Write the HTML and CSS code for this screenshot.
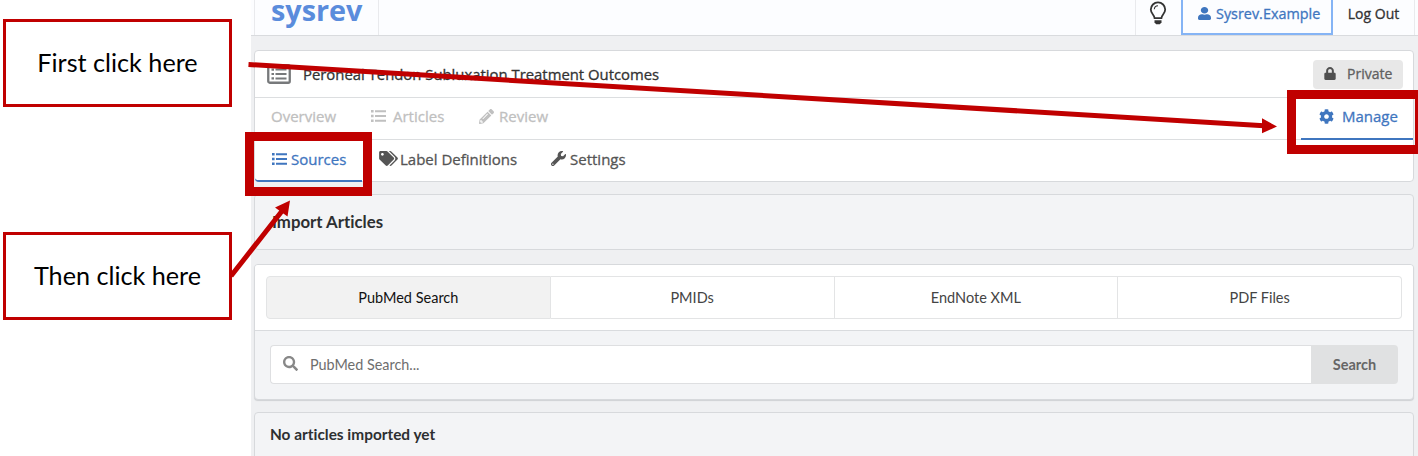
FILE: index.html
```html
<!DOCTYPE html>
<html lang="en">
<head>
<meta charset="utf-8">
<title>sysrev</title>
<link rel="stylesheet" href="styles.css">
</head>
<body>
<div class="page">
  <aside class="notes">
    <div class="note"><span class="note-first">First click here</span></div>
    <div class="note"><span class="note-then">Then click here</span></div>
  </aside>
  <div class="app">
    <header class="topbar">
      <div class="topmenu">
        <div class="logo"><span>sysrev</span></div>
        <div class="theme">
          <svg class="bulb" viewBox="0 0 18 24"><path d="M5.6 17.2C5.4 13.6 1.8 12.600 1.8 8.600A7.200 7.200 0 0 1 16.200 8.600C16.200 12.600 12.600 13.600 12.400 17.200Z" fill="none" stroke="currentColor" stroke-width="1.8"/><path d="M5.300 8.300A3.800 3.800 0 0 1 9 4.800" fill="none" stroke="currentColor" stroke-width="1.100"/><path d="M5.500 19.300h7v2.200l-1.700 1.800h-3.600l-1.700-1.800z" fill="currentColor"/></svg>
        </div>
        <div class="user">
          <svg class="icon-user" viewBox="0 0 448 512" preserveAspectRatio="none"><path d="M224 256c70.7 0 128-57.3 128-128S294.700 0 224 0 96 57.300 96 128s57.300 128 128 128zm89.600 32h-16.700c-22.200 10.200-46.900 16-72.900 16s-50.600-5.800-72.900-16h-16.700C60.200 288 0 348.200 0 422.400V464c0 26.500 21.500 48 48 48h352c26.500 0 48-21.500 48-48v-41.600c0-74.200-60.200-134.400-134.400-134.400z"/></svg>
          <span>Sysrev.Example</span>
        </div>
        <div class="logout"><span>Log Out</span></div>
      </div>
    </header>
    <main class="content">
      <section class="card project">
        <div class="project-title">
          <svg class="icon-listalt" viewBox="0 0 24 20"><rect x="1.250" y="1.250" width="21.500" height="17.500" rx="1.500" fill="none" stroke="currentColor" stroke-width="2.300"/><path d="M4.500 4.500h2.500v2.200H4.500zM8.500 4.600h11v2h-11zM4.500 8.900h2.500v2.200H4.500zM8.500 9h11v2h-11zM4.500 13.300h2.500v2.200H4.500zM8.500 13.400h11v2h-11z"/></svg>
          <span class="title">Peroneal Tendon Subluxation Treatment Outcomes</span>
          <div class="private">
            <svg class="icon-lock" viewBox="0 0 448 512"><path d="M400 224h-24v-72C376 68.200 307.800 0 224 0S72 68.200 72 152v72H48c-26.500 0-48 21.500-48 48v192c0 26.500 21.500 48 48 48h352c26.500 0 48-21.500 48-48V272c0-26.500-21.500-48-48-48zm-104 0H152v-72c0-39.700 32.300-72 72-72s72 32.300 72 72v72z"/></svg>
            <span>Private</span>
          </div>
        </div>
        <nav class="tabs primary">
          <span class="tab overview">Overview</span>
          <span class="tab articles"><svg class="icon-list" viewBox="0 0 15 12"><path d="M0 0h2.600v2.400H0zM4 .2h11v2H4zM0 4.800h2.600v2.400H0zM4 5h11v2H4zM0 9.600h2.600V12H0zM4 9.800h11v2H4z"/></svg>Articles</span>
          <span class="tab review"><svg class="icon-pencil" viewBox="0 0 512 512"><path d="M497.900 142.100l-46.100 46.100c-4.700 4.700-12.300 4.700-17 0l-111-111c-4.700-4.700-4.700-12.300 0-17l46.100-46.100c18.700-18.700 49.100-18.700 67.900 0l60.100 60.100c18.800 18.700 18.800 49.100 0 67.900zM284.200 99.800L21.600 362.400.4 483.900c-2.900 16.400 11.400 30.600 27.800 27.800l121.500-21.300 262.600-262.600c4.700-4.700 4.700-12.300 0-17l-111-111c-4.800-4.700-12.400-4.700-17.100 0zM124.100 339.900c-5.500-5.500-5.500-14.300 0-19.800l154-154c5.500-5.500 14.300-5.500 19.800 0s5.500 14.300 0 19.800l-154 154c-5.500 5.500-14.300 5.500-19.800 0zM88 424h48v36.300l-64.500 11.300-31.100-31.100L51.700 376H88v48z"/></svg>Review</span>
          <span class="tab manage"><svg class="icon-cog" viewBox="0 0 512 512"><path d="M487.400 315.700l-42.600-24.600c4.300-23.200 4.300-47 0-70.200l42.600-24.600c4.900-2.800 7.100-8.600 5.500-14-11.100-35.600-30-67.800-54.700-94.600-3.800-4.100-10-5.100-14.800-2.300L380.800 110c-17.900-15.400-38.500-27.300-60.800-35.100V25.800c0-5.600-3.900-10.500-9.400-11.700-36.700-8.200-74.300-7.800-109.200 0-5.500 1.200-9.400 6.100-9.400 11.700V75c-22.200 7.900-42.800 19.800-60.800 35.100L88.700 85.500c-4.900-2.800-11-1.900-14.800 2.300-24.700 26.700-43.600 58.900-54.700 94.600-1.700 5.400.6 11.200 5.500 14L67.300 221c-4.300 23.200-4.300 47 0 70.200l-42.600 24.600c-4.900 2.800-7.100 8.600-5.500 14 11.100 35.600 30 67.800 54.700 94.600 3.800 4.100 10 5.100 14.800 2.300l42.600-24.600c17.900 15.400 38.500 27.300 60.800 35.100v49.200c0 5.600 3.900 10.500 9.400 11.700 36.700 8.200 74.300 7.800 109.200 0 5.500-1.200 9.400-6.100 9.400-11.700v-49.200c22.200-7.900 42.800-19.800 60.800-35.100l42.600 24.600c4.900 2.800 11 1.900 14.800-2.300 24.700-26.700 43.600-58.900 54.700-94.600 1.500-5.500-.7-11.300-5.600-14.100zM256 336c-44.100 0-80-35.900-80-80s35.900-80 80-80 80 35.900 80 80-35.900 80-80 80z"/></svg>Manage</span>
        </nav>
        <nav class="tabs secondary">
          <span class="tab sources"><svg class="icon-list" viewBox="0 0 15 12"><path d="M0 0h2.600v2.400H0zM4 .2h11v2H4zM0 4.800h2.600v2.400H0zM4 5h11v2H4zM0 9.600h2.600V12H0zM4 9.800h11v2H4z"/></svg>Sources</span>
          <span class="tab labels"><svg class="icon-tags" viewBox="0 0 640 512"><path d="M497.941 225.941L286.059 14.059A48 48 0 0 0 252.118 0H48C21.490 0 0 21.490 0 48v204.118a48 48 0 0 0 14.059 33.941l211.882 211.882c18.744 18.745 49.136 18.746 67.882 0l204.118-204.118c18.745-18.745 18.745-49.137 0-67.882zM112 160c-26.510 0-48-21.490-48-48s21.490-48 48-48 48 21.490 48 48-21.490 48-48 48zm513.941 133.823L421.823 497.941c-18.745 18.745-49.137 18.745-67.882 0l-.36-.36L527.640 323.522c16.999-16.999 26.360-39.600 26.360-63.640s-9.362-46.641-26.360-63.640L331.397 0h48.721a48 48 0 0 1 33.941 14.059l211.882 211.882c18.745 18.745 18.745 49.137 0 67.882z"/></svg>Label Definitions</span>
          <span class="tab settings"><svg class="icon-wrench" viewBox="0 0 512 512"><path d="M507.730 109.100c-2.240-9.030-13.540-12.090-20.120-5.510l-74.360 74.360-67.880-11.310-11.310-67.880 74.360-74.360c6.620-6.620 3.430-17.900-5.660-20.160-47.380-11.740-99.550.91-136.580 37.930-39.640 39.640-50.550 97.100-34.050 147.200L18.740 402.760c-24.990 24.990-24.990 65.510 0 90.500 24.990 24.990 65.510 24.990 90.500 0l213.210-213.210c50.120 16.710 107.470 5.680 147.370-34.220 37.070-37.070 49.700-89.320 37.910-136.730zM64 472c-13.250 0-24-10.750-24-24 0-13.260 10.750-24 24-24s24 10.740 24 24c0 13.250-10.750 24-24 24z"/></svg>Settings</span>
        </nav>
      </section>
      <section class="card import"><h4>Import Articles</h4></section>
      <section class="card sources-card">
        <div class="source-tabs">
          <span class="source active">PubMed Search</span>
          <span class="source">PMIDs</span>
          <span class="source">EndNote XML</span>
          <span class="source">PDF Files</span>
        </div>
        <div class="search-row">
          <div class="search-input">
            <svg class="icon-search" viewBox="0 0 512 512"><path d="M505 442.700L405.300 343c-4.500-4.500-10.600-7-17-7H372c27.600-35.300 44-79.700 44-128C416 93.100 322.900 0 208 0S0 93.100 0 208s93.100 208 208 208c48.300 0 92.700-16.400 128-44v16.300c0 6.400 2.500 12.500 7 17l99.700 99.700c9.400 9.400 24.600 9.400 33.900 0l28.300-28.300c9.400-9.400 9.400-24.600.1-34zM208 336c-70.700 0-128-57.200-128-128 0-70.700 57.200-128 128-128 70.700 0 128 57.200 128 128 0 70.700-57.200 128-128 128z"/></svg>
            <span>PubMed Search...</span>
          </div>
          <div class="search-button"><span>Search</span></div>
        </div>
      </section>
      <section class="card empty"><h5>No articles imported yet</h5></section>
    </main>
  </div>
  <svg class="annotations" viewBox="0 0 1418 456">
    <rect x="1291.500" y="94.500" width="128" height="55"/>
    <rect x="249.500" y="136.500" width="118" height="55"/>
    <path d="M248.500 64.500L1264 125.700M231 276L282 211" class="shaft"/>
    <path d="M1277 126.600L1262 118.300V133.200ZM290 200.500L275 207.500L287.500 216.500Z" class="head"/>
  </svg>
</div>
</body>
</html>
```
FILE: styles.css
```css
* { box-sizing: border-box; }
body { margin: 0; background: #fff; font-family: "Open Sans", sans-serif; font-size: 14px; font-weight: 500; color: #333; font-variant-ligatures: none; }
svg { flex: none; fill: currentColor; display: block; }
span { white-space: nowrap; }
h4, h5 { margin: 0; font-family: Lato, sans-serif; font-weight: 700; color: #2d2f31; }

.page { position: relative; display: flex; width: 1418px; height: 456px; overflow: hidden; }
.notes { width: 251px; padding: 19px 0 0 3px; display: flex; flex-direction: column; gap: 125px; }
.note { width: 229px; height: 88px; padding-bottom: 2px; border: 3px solid #c00000; display: flex; align-items: center; justify-content: center; color: #000; font-family: Lato, sans-serif; font-size: 25.200px; font-weight: 400; }

.app { flex: 1; background: #eff0f2; }
.topbar { height: 36px; padding: 0 3px; background: #fcfdff; border-bottom: 1px solid #d9dbde; }
.topmenu { display: flex; height: 35px; border: solid #e9eaed; border-width: 0 1px; }
.logo { width: 124px; border-right: 1px solid #e9eaed; padding-left: 16px; color: #5a8cdc; font-weight: 700; font-size: 28.800px; line-height: 19px; }
.theme { margin-left: auto; width: 46px; border-left: 1px solid #e9eaed; display: flex; justify-content: center; }
.bulb { width: 18px; height: 24px; margin-top: 1px; margin-right: 2px; }
.user { width: 152px; height: 35px; border: 2px solid #85b4f5; border-width: 0 2px 2px; display: flex; gap: 5px; padding-left: 15px; color: #3f76bf; line-height: 28px; font-size: 14.400px; }
.icon-user { width: 13px; height: 13px; margin-top: 7px; }
.logout { width: 81px; text-align: center; line-height: 28px; }
.user, .logout, .title, .private, .tabs { -webkit-text-stroke: 0.3px currentColor; }

.content { padding: 14px 4px 0 3px; }
.card { border: 1px solid #d7d9dc; border-radius: 4px; background: #f3f4f6; }
.project { height: 132px; background: #fff; }
.project-title { height: 47px; display: flex; align-items: center; padding: 0 10px 0 12px; border-bottom: 1px solid #dcdee0; }
.icon-listalt { width: 24px; height: 20px; color: #77797b; }
.title { margin-left: 12px; padding-bottom: 1px; font-size: 14.870px; }
.private { margin-left: auto; width: 90px; height: 29px; border-radius: 4px; background: #e8e8e8; color: #606060; display: flex; align-items: center; padding: 0 0 1px 11px; }
.icon-lock { width: 12px; height: 13px; margin-right: 11px; color: #505050; }
.tabs { height: 42px; display: flex; border-bottom: 1px solid #dcdee0; font-size: 15px; color: #555; }
.tab { display: flex; align-items: center; height: 42px; padding-bottom: 5px; }
.primary { color: #c0c0c0; }
.primary .tab { padding-bottom: 6px; }
.secondary { border-bottom: 0; }
.overview { width: 115px; padding-left: 16px; }
.articles { width: 109px; padding-left: 1px; }
.articles .icon-list { margin-right: 7px; }
.icon-list { width: 15px; height: 12px; margin-right: 5px; }
.icon-pencil { width: 15px; height: 15px; margin-right: 5px; }
.primary .manage { margin-left: auto; width: 112px; padding: 0 0 4px 18px; color: #3f76bf; border-bottom: 2px solid #3f76bf; }
.icon-cog { width: 15px; height: 15px; margin-right: 8px; }
.sources { width: 107px; padding: 0 0 3px 17px; color: #3f76bf; border-bottom: 2px solid #3f76bf; border-bottom-left-radius: 4px; margin-right: 17px; }
.sources .icon-list { margin-right: 4px; }
.labels { width: 172px; }
.icon-tags { width: 19px; height: 15px; margin-right: 2px; }
.icon-wrench { width: 15px; height: 15px; margin-right: 4px; }

.import { height: 56px; margin-top: 12px; padding-left: 17px; }
.import h4 { font-size: 16.800px; line-height: 54px; }
.sources-card { height: 136px; margin-top: 14px; box-shadow: 0 1px 1px #cfd1d4; overflow: hidden; }
.source-tabs { height: 66px; padding: 11px; background: #fff; border-bottom: 1px solid #d9dbde; display: flex; font-family: Lato, sans-serif; font-size: 14.500px; font-weight: 400; color: #444; }
.source { flex: 1; height: 43px; line-height: 41px; text-align: center; border: 1px solid #e3e4e5; border-left-width: 0; }
.source:first-child { border-left-width: 1px; border-radius: 4px 0 0 4px; }
.source:last-child { border-radius: 0 4px 4px 0; }
.active { background: #f2f2f2; color: #111; }
.search-row { display: flex; padding: 14px 15px; font-family: Lato, sans-serif; }
.search-input { flex: 1; height: 39px; background: #fff; border: 1px solid #dedfe1; border-right: 0; border-radius: 4px 0 0 4px; display: flex; align-items: center; padding-left: 12px; gap: 12px; font-size: 14.400px; font-weight: 400; color: #6e6e6e; }
.icon-search { width: 15px; height: 15px; margin-bottom: 2px; color: #888; }
.search-button { width: 87px; height: 39px; line-height: 39px; background: #e0e1e2; border-radius: 0 4px 4px 0; text-align: center; font-weight: 700; font-size: 14.500px; color: #666; }
.empty { height: 60px; margin-top: 12px; padding-left: 15px; }
.empty h5 { font-size: 15.400px; line-height: 43px; }

.annotations { position: absolute; left: 0; top: 0; width: 1418px; height: 456px; }
.annotations rect { fill: none; stroke: #c00000; stroke-width: 9; }
.shaft { fill: none; stroke: #c00000; stroke-width: 5; }
.head { fill: #c00000; }
```
